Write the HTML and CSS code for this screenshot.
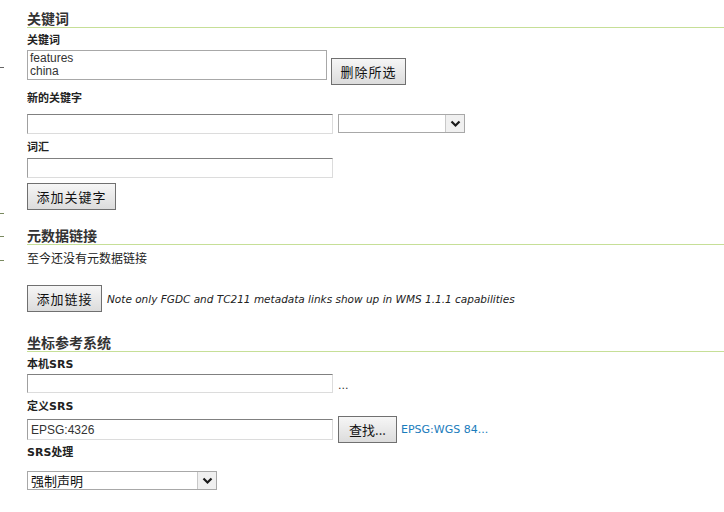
FILE: index.html
```html
<!DOCTYPE html>
<html>
<head>
<meta charset="utf-8">
<link rel="stylesheet" href="styles.css">
</head>
<body>
<div class="ticks">
  <span class="tick t1"></span>
  <span class="tick t2"></span>
  <span class="tick t3"></span>
  <span class="tick t4"></span>
</div>
<div class="page">
  <h2 class="heading h-first">关键词</h2>
  <div class="label l-kw">关键词</div>
  <div class="row row-kw">
    <div class="listbox">
      <div class="opt">features</div>
      <div class="opt">china</div>
    </div>
    <button class="btn btn-del">删除所选</button>
  </div>
  <div class="label l-new">新的关键字</div>
  <div class="row row-new">
    <input class="field field-new" type="text">
    <div class="select sel-vocab">
      <span class="sel-text"></span>
      <span class="sel-arrow"><svg width="11" height="8" viewBox="0 0 11 8"><path d="M1.5 1.5 L5.5 5.5 L9.5 1.5" fill="none" stroke="#1a1a1a" stroke-width="2.2"/></svg></span>
    </div>
  </div>
  <div class="label l-voc">词汇</div>
  <input class="field field-voc" type="text">
  <button class="btn btn-add">添加关键字</button>

  <h2 class="heading h-meta">元数据链接</h2>
  <div class="text t-none">至今还没有元数据链接</div>
  <div class="row row-link">
    <button class="btn btn-link">添加链接</button>
    <span class="note">Note only FGDC and TC211 metadata links show up in WMS 1.1.1 capabilities</span>
  </div>

  <h2 class="heading h-srs">坐标参考系统</h2>
  <div class="label l-native">本机SRS</div>
  <div class="row row-native">
    <input class="field field-native" type="text">
    <span class="dots">...</span>
  </div>
  <div class="label l-decl">定义SRS</div>
  <div class="row row-decl">
    <input class="field field-decl" type="text" value="EPSG:4326">
    <button class="btn btn-find">查找...</button>
    <a class="link" href="#">EPSG:WGS 84...</a>
  </div>
  <div class="label l-handle">SRS处理</div>
  <div class="select sel-handle">
    <span class="sel-text">强制声明</span>
    <span class="sel-arrow"><svg width="11" height="8" viewBox="0 0 11 8"><path d="M1.5 1.5 L5.5 5.5 L9.5 1.5" fill="none" stroke="#1a1a1a" stroke-width="2.2"/></svg></span>
  </div>
</div>
</body>
</html>
```
FILE: styles.css
```css
* { box-sizing: border-box; }
html, body {
  margin: 0;
  padding: 0;
  background: #ffffff;
}
body {
  width: 724px;
  height: 512px;
  overflow: hidden;
  position: relative;
  font-family: "DejaVu Sans", "Noto Sans CJK SC", sans-serif;
  color: #333333;
}
.ticks { position: absolute; left: 0; top: 0; }
.tick {
  position: absolute;
  left: 0;
  width: 4px;
  height: 1px;
  background: #666;
}
.t1 { top: 67px; }
.t2 { top: 213px; background: #7a8a60; }
.t3 { top: 236px; background: #7a8a60; }
.t4 { top: 260px; background: #7a8a60; }

.page {
  padding: 10px 0 0 27px;
}
.heading {
  margin: 0;
  font-family: "Noto Sans CJK SC", sans-serif;
  font-size: 14px;
  font-weight: bold;
  line-height: 17px;
  height: 18px;
  color: #333333;
  border-bottom: 1px solid #c6df97;
}
.h-meta { margin-top: 17px; }
.h-srs { margin-top: 22px; }

.label {
  font-family: "DejaVu Sans", "Noto Sans CJK SC", sans-serif;
  font-size: 11px;
  font-weight: bold;
  line-height: 14px;
  height: 14px;
  color: #222222;
}
.l-kw { margin-top: 6px; }
.l-new { margin-top: 7px; }
.l-voc { margin-top: 7px; }
.l-native { margin-top: 6px; }
.l-decl { margin-top: 7px; }
.l-handle { margin-top: 3px; }

.row { display: flex; align-items: flex-start; }

.listbox {
  margin-top: 2px;
  width: 300px;
  height: 30px;
  border: 1px solid #a8a8a8;
  padding: 1px 2px;
  font-family: "Liberation Sans", sans-serif;
  font-size: 12px;
  line-height: 13px;
  color: #333;
}

.btn {
  display: block;
  margin: 0;
  padding: 0;
  height: 27px;
  border: 1px solid #707070;
  border-radius: 0;
  background: linear-gradient(#f6f6f6, #dcdcdc);
  font-family: "Noto Sans CJK SC", sans-serif;
  font-size: 13px;
  letter-spacing: 1px;
  color: #111;
  cursor: pointer;
}
.btn-del { width: 75px; margin-left: 4px; margin-top: 10px; }
.btn-add { width: 89px; margin-top: 5px; }
.btn-link { width: 75px; }
.btn-find { width: 59px; margin-left: 5px; letter-spacing: 0; }

.field {
  display: block;
  margin: 0;
  height: 20px;
  border: 1px solid #dcdcdc;
  border-top-color: #808080;
  border-left-color: #a0a0a0;
  padding: 0 3px;
  font-family: "Liberation Sans", sans-serif;
  font-size: 12px;
  color: #333;
  background: #fff;
}
.field-new { width: 306px; margin-top: 8px; }
.field-voc { width: 306px; margin-top: 3px; }
.field-native { width: 306px; margin-top: 2px; height: 19px; }
.field-decl { width: 306px; height: 21px; }

.select {
  display: flex;
  align-items: stretch;
  height: 19px;
  border: 1px solid #a8a8a8;
  background: #fff;
}
.sel-text {
  flex: 1;
  padding-left: 3px;
  font-family: "Noto Sans CJK SC", sans-serif;
  font-size: 13px;
  line-height: 17px;
  color: #111;
}
.sel-arrow {
  width: 19px;
  border-left: 1px solid #c8c8c8;
  background: #f0f0f0;
  display: flex;
  align-items: center;
  justify-content: center;
}
.sel-vocab { width: 127px; margin-left: 5px; margin-top: 8px; }
.sel-handle { width: 190px; margin-top: 11px; }

.text {
  font-family: "Noto Sans CJK SC", sans-serif;
  font-size: 12px;
  line-height: 14px;
  color: #222;
}
.t-none { margin-top: 6px; }

.row-link { margin-top: 20px; align-items: center; }
.note {
  margin-left: 5px;
  font-family: "DejaVu Sans", sans-serif;
  font-style: italic;
  font-size: 10.5px;
  color: #222;
}

.dots {
  margin-left: 5px;
  margin-top: 7px;
  font-size: 11px;
  color: #333;
}

.row-decl { margin-top: 2px; align-items: center; }
.link {
  margin-left: 4px;
  font-family: "DejaVu Sans", sans-serif;
  font-size: 11px;
  color: #1a7cbc;
  text-decoration: none;
}
```
